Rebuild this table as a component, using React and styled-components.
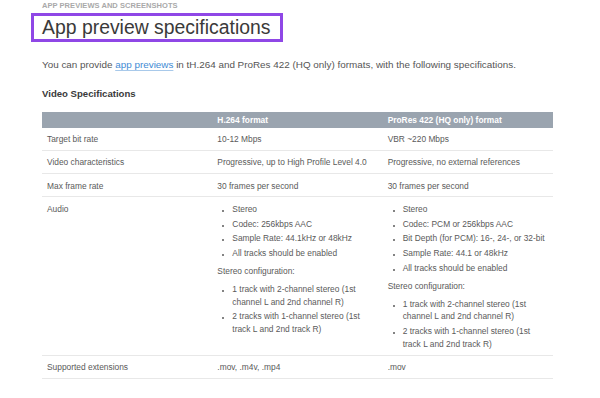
import React from "react";
import styled, { createGlobalStyle } from "styled-components";

const Global = createGlobalStyle`
  html, body { margin: 0; padding: 0; background: #fff; }
  body { font-family: "Liberation Sans", Arial, sans-serif; color: #555; }
  * { box-sizing: border-box; }
`;

const Page = styled.div`
  width: 600px;
  height: 398px;
  overflow: hidden;
  padding: 1px 0 0 42px;
`;

const Eyebrow = styled.div`
  font-size: 7.5px;
  line-height: 10px;
  font-weight: 700;
  color: #a9a9a9;
  letter-spacing: 0.05px;
`;

const Title = styled.h1`
  display: inline-block;
  margin: 2px 0 0 -11px;
  padding: 0 9px 0 8px;
  border: 3px solid #8f47e6;
  font-size: 19.4px;
  line-height: 23px;
  font-weight: 400;
  color: #3a3a3a;
`;

const Intro = styled.p`
  margin: 16px 0 0;
  font-size: 9.9px;
  line-height: 13px;
  color: #555;
`;

const Link = styled.a`
  color: #3f8bd4;
  text-decoration: underline;
  text-decoration-color: #a8c9ea;
  text-underline-offset: 1.5px;
`;

const SectionTitle = styled.h2`
  margin: 16px 0 0;
  font-size: 9.6px;
  line-height: 13px;
  font-weight: 700;
  color: #3a3a3a;
`;

const Table = styled.table`
  margin-top: 11.5px;
  width: 511px;
  border-collapse: collapse;
  table-layout: fixed;
  font-size: 8.4px;
  line-height: 12.8px;
  color: #5a5a5a;
`;

const HeadCell = styled.th`
  background: #9aa4af;
  color: #fff;
  font-weight: 700;
  text-align: left;
  height: 16px;
  padding: 0 5px;
  line-height: 16px;
`;

const Row = styled.tr`
  border-bottom: 1px solid #e8e8e8;
`;

const Cell = styled.td`
  vertical-align: top;
  padding: 5.5px 5px 4px;
`;

const Bullets = styled.ul`
  margin: 0;
  padding-left: 15px;
  list-style: disc;
  & li + li { margin-top: 2px; }
  & li::marker { font-size: 6px; }
`;

const Note = styled.p`
  margin: 5px 0;
`;

const Audio = ({ main, pairs }) => (
  <>
    <Bullets>
      {main.map((t) => (
        <li key={t}>{t}</li>
      ))}
    </Bullets>
    <Note>Stereo configuration:</Note>
    <Bullets>
      {pairs.map((t) => (
        <li key={t}>{t}</li>
      ))}
    </Bullets>
  </>
);

const pairs = [
  "1 track with 2-channel stereo (1st channel L and 2nd channel R)",
  "2 tracks with 1-channel stereo (1st track L and 2nd track R)",
];

const rows = [
  ["Target bit rate", "10-12 Mbps", "VBR ~220 Mbps"],
  [
    "Video characteristics",
    "Progressive, up to High Profile Level 4.0",
    "Progressive, no external references",
  ],
  ["Max frame rate", "30 frames per second", "30 frames per second"],
];

export default function App() {
  return (
    <>
      <Global />
      <Page>
        <Eyebrow>APP PREVIEWS AND SCREENSHOTS</Eyebrow>
        <Title>App preview specifications</Title>
        <Intro>
          You can provide <Link href="#">app previews</Link> in tH.264 and
          ProRes 422 (HQ only) formats, with the following specifications.
        </Intro>
        <SectionTitle>Video Specifications</SectionTitle>
        <Table>
          <thead>
            <tr>
              <HeadCell></HeadCell>
              <HeadCell>H.264 format</HeadCell>
              <HeadCell>ProRes 422 (HQ only) format</HeadCell>
            </tr>
          </thead>
          <tbody>
            {rows.map((r) => (
              <Row key={r[0]}>
                <Cell>{r[0]}</Cell>
                <Cell>{r[1]}</Cell>
                <Cell>{r[2]}</Cell>
              </Row>
            ))}
            <Row>
              <Cell>Audio</Cell>
              <Cell>
                <Audio
                  main={[
                    "Stereo",
                    "Codec: 256kbps AAC",
                    "Sample Rate: 44.1kHz or 48kHz",
                    "All tracks should be enabled",
                  ]}
                  pairs={pairs}
                />
              </Cell>
              <Cell>
                <Audio
                  main={[
                    "Stereo",
                    "Codec: PCM or 256kbps AAC",
                    "Bit Depth (for PCM): 16-, 24-, or 32-bit",
                    "Sample Rate: 44.1 or 48kHz",
                    "All tracks should be enabled",
                  ]}
                  pairs={pairs}
                />
              </Cell>
            </Row>
            <Row>
              <Cell>Supported extensions</Cell>
              <Cell>.mov, .m4v, .mp4</Cell>
              <Cell>.mov</Cell>
            </Row>
          </tbody>
        </Table>
      </Page>
    </>
  );
}
